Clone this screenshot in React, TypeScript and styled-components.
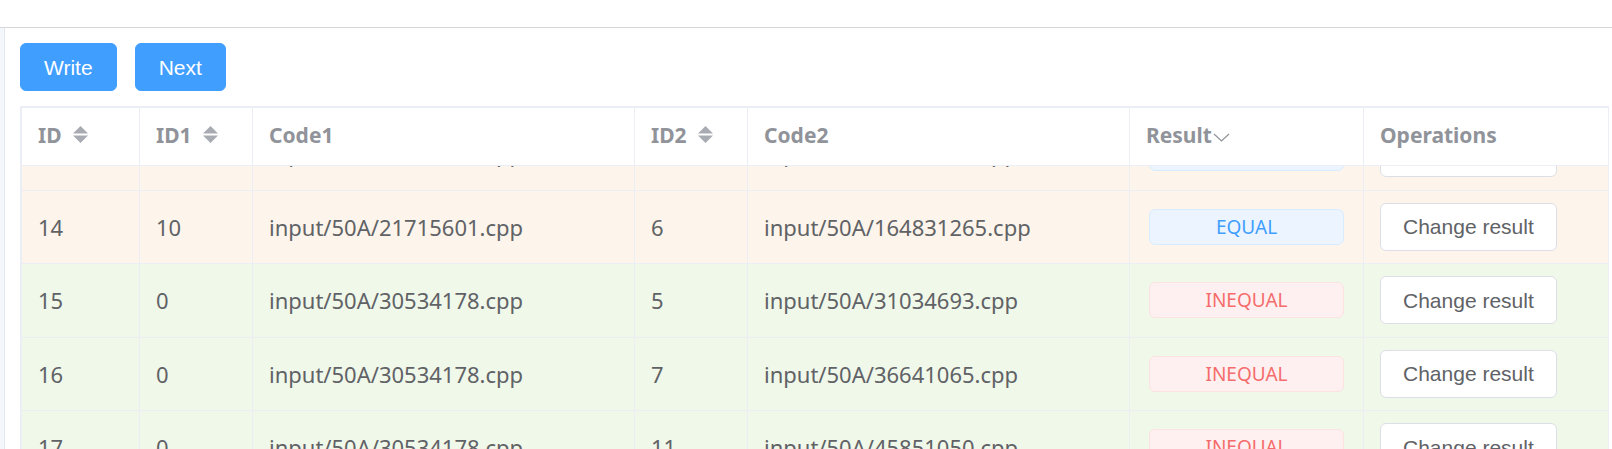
import React, { useLayoutEffect, useRef } from "react";
import styled, { createGlobalStyle } from "styled-components";

const GlobalStyle = createGlobalStyle`
  html, body {
    margin: 0;
    padding: 0;
    background: #ffffff;
    overflow: hidden;
  }
  body {
    font-family: "Noto Sans", "Open Sans", sans-serif;
  }
  * { box-sizing: border-box; }
`;

const COLUMNS = "118px 113px 382px 113px 382px 234px 1fr";

const Page = styled.div`
  display: flex;
  flex-direction: column;
  width: 1612px;
  height: 449px;
`;

const TopBar = styled.header`
  height: 28px;
  flex: none;
  background: #ffffff;
  border-bottom: 1px solid #d4d6da;
`;

const Layout = styled.div`
  flex: 1;
  display: flex;
  min-height: 0;
`;

const Aside = styled.aside`
  width: 5px;
  flex: none;
  background: #f4f7fc;
  border-right: 1px solid #e3e7ef;
`;

const Main = styled.main`
  flex: 1;
  min-width: 0;
  display: flex;
  flex-direction: column;
  padding: 15px 3px 0 15px;
  overflow: hidden;
`;

const Toolbar = styled.div`
  display: flex;
  flex: none;
  gap: 18px;
`;

const PrimaryButton = styled.button`
  height: 48px;
  padding: 0 23px;
  border: 1px solid #409eff;
  border-radius: 6px;
  background: #409eff;
  color: #ffffff;
  font-family: "Liberation Sans", Arial, sans-serif;
  font-size: 21px;
  line-height: 1;
  cursor: pointer;
`;

const Table = styled.div`
  margin-top: 15px;
  border-top: 2px solid #ebeef5;
  border-left: 2px solid #ebeef5;
  border-right: 1px solid #ebeef5;
  display: flex;
  flex-direction: column;
  flex: none;
`;

const HeaderRow = styled.div`
  display: grid;
  flex: none;
  grid-template-columns: ${COLUMNS};
  height: 58px;
  border-bottom: 1px solid #ebeef5;
  background: #ffffff;
`;

const HeaderCell = styled.div<{ $last?: boolean }>`
  display: flex;
  align-items: center;
  padding: 0 16px 4px;
  border-right: ${(p) => (p.$last ? "none" : "1px solid #ebeef5")};
  color: #909399;
  font-weight: 700;
  font-size: 21px;
  white-space: nowrap;
`;

const SortCaret = styled.svg`
  margin-left: 11px;
  flex: none;
`;

const FilterArrow = styled.svg`
  margin-left: 1px;
  margin-top: 6px;
  flex: none;
`;

const BodyScroll = styled.div`
  height: 300px;
  flex: none;
  overflow: hidden;
`;

const Row = styled.div<{ $tone: "warning" | "success" }>`
  display: grid;
  grid-template-columns: ${COLUMNS};
  height: 73.5px;
  border-bottom: 1px solid #ebeef5;
  background: ${(p) => (p.$tone === "warning" ? "#fdf5eb" : "#f0f8ea")};
`;

const Cell = styled.div<{ $last?: boolean }>`
  display: flex;
  align-items: center;
  padding: 0 16px;
  border-right: ${(p) => (p.$last ? "none" : "1px solid #ebeef5")};
  color: #606266;
  font-size: 22px;
  white-space: nowrap;
`;

const Tag = styled.span<{ $kind: "equal" | "inequal" }>`
  flex: 1;
  height: 36px;
  margin: 0 3px;
  display: flex;
  align-items: center;
  justify-content: center;
  border-radius: 6px;
  font-size: 19px;
  border: 1px solid ${(p) => (p.$kind === "equal" ? "#d9ecff" : "#fde2e2")};
  background: ${(p) => (p.$kind === "equal" ? "#ecf5ff" : "#fef0f0")};
  color: ${(p) => (p.$kind === "equal" ? "#409eff" : "#f56c6c")};
`;

const OpButton = styled.button`
  height: 48px;
  padding: 0 22px;
  border: 1px solid #dcdfe6;
  border-radius: 6px;
  background: #ffffff;
  color: #606266;
  font-family: "Liberation Sans", Arial, sans-serif;
  font-size: 21px;
  line-height: 1;
  cursor: pointer;
`;

type Item = {
  id: number;
  id1: number;
  code1: string;
  id2: number;
  code2: string;
  result: "EQUAL" | "INEQUAL";
};

const rows: Item[] = [
  { id: 13, id1: 10, code1: "input/50A/21715601.cpp", id2: 4, code2: "input/50A/14276913.cpp", result: "EQUAL" },
  { id: 14, id1: 10, code1: "input/50A/21715601.cpp", id2: 6, code2: "input/50A/164831265.cpp", result: "EQUAL" },
  { id: 15, id1: 0, code1: "input/50A/30534178.cpp", id2: 5, code2: "input/50A/31034693.cpp", result: "INEQUAL" },
  { id: 16, id1: 0, code1: "input/50A/30534178.cpp", id2: 7, code2: "input/50A/36641065.cpp", result: "INEQUAL" },
  { id: 17, id1: 0, code1: "input/50A/30534178.cpp", id2: 11, code2: "input/50A/45851050.cpp", result: "INEQUAL" },
  { id: 18, id1: 0, code1: "input/50A/30534178.cpp", id2: 12, code2: "input/50A/47012833.cpp", result: "INEQUAL" },
];

const Caret = () => (
  <SortCaret width="15" height="17" viewBox="0 0 15 17">
    <polygon points="0,7.5 7.5,0 15,7.5" fill="#a8abb2" />
    <polygon points="0,9.5 15,9.5 7.5,17" fill="#a8abb2" />
  </SortCaret>
);

const Arrow = () => (
  <FilterArrow width="17" height="9" viewBox="0 0 17 9">
    <polyline points="1,1 8.5,8 16,1" fill="none" stroke="#909399" strokeWidth="1.2" />
  </FilterArrow>
);

export default function App() {
  const bodyRef = useRef<HTMLDivElement>(null);

  useLayoutEffect(() => {
    if (bodyRef.current) bodyRef.current.scrollTop = 49;
  }, []);

  return (
    <>
      <GlobalStyle />
      <Page>
        <TopBar />
        <Layout>
          <Aside />
          <Main>
            <Toolbar>
              <PrimaryButton>Write</PrimaryButton>
              <PrimaryButton>Next</PrimaryButton>
            </Toolbar>
            <Table>
              <HeaderRow>
                <HeaderCell>
                  ID
                  <Caret />
                </HeaderCell>
                <HeaderCell>
                  ID1
                  <Caret />
                </HeaderCell>
                <HeaderCell>Code1</HeaderCell>
                <HeaderCell>
                  ID2
                  <Caret />
                </HeaderCell>
                <HeaderCell>Code2</HeaderCell>
                <HeaderCell>
                  Result
                  <Arrow />
                </HeaderCell>
                <HeaderCell $last>Operations</HeaderCell>
              </HeaderRow>
              <BodyScroll ref={bodyRef}>
                {rows.map((r) => (
                  <Row key={r.id} $tone={r.result === "EQUAL" ? "warning" : "success"}>
                    <Cell>{r.id}</Cell>
                    <Cell>{r.id1}</Cell>
                    <Cell>{r.code1}</Cell>
                    <Cell>{r.id2}</Cell>
                    <Cell>{r.code2}</Cell>
                    <Cell>
                      <Tag $kind={r.result === "EQUAL" ? "equal" : "inequal"}>{r.result}</Tag>
                    </Cell>
                    <Cell $last>
                      <OpButton>Change result</OpButton>
                    </Cell>
                  </Row>
                ))}
              </BodyScroll>
            </Table>
          </Main>
        </Layout>
      </Page>
    </>
  );
}
